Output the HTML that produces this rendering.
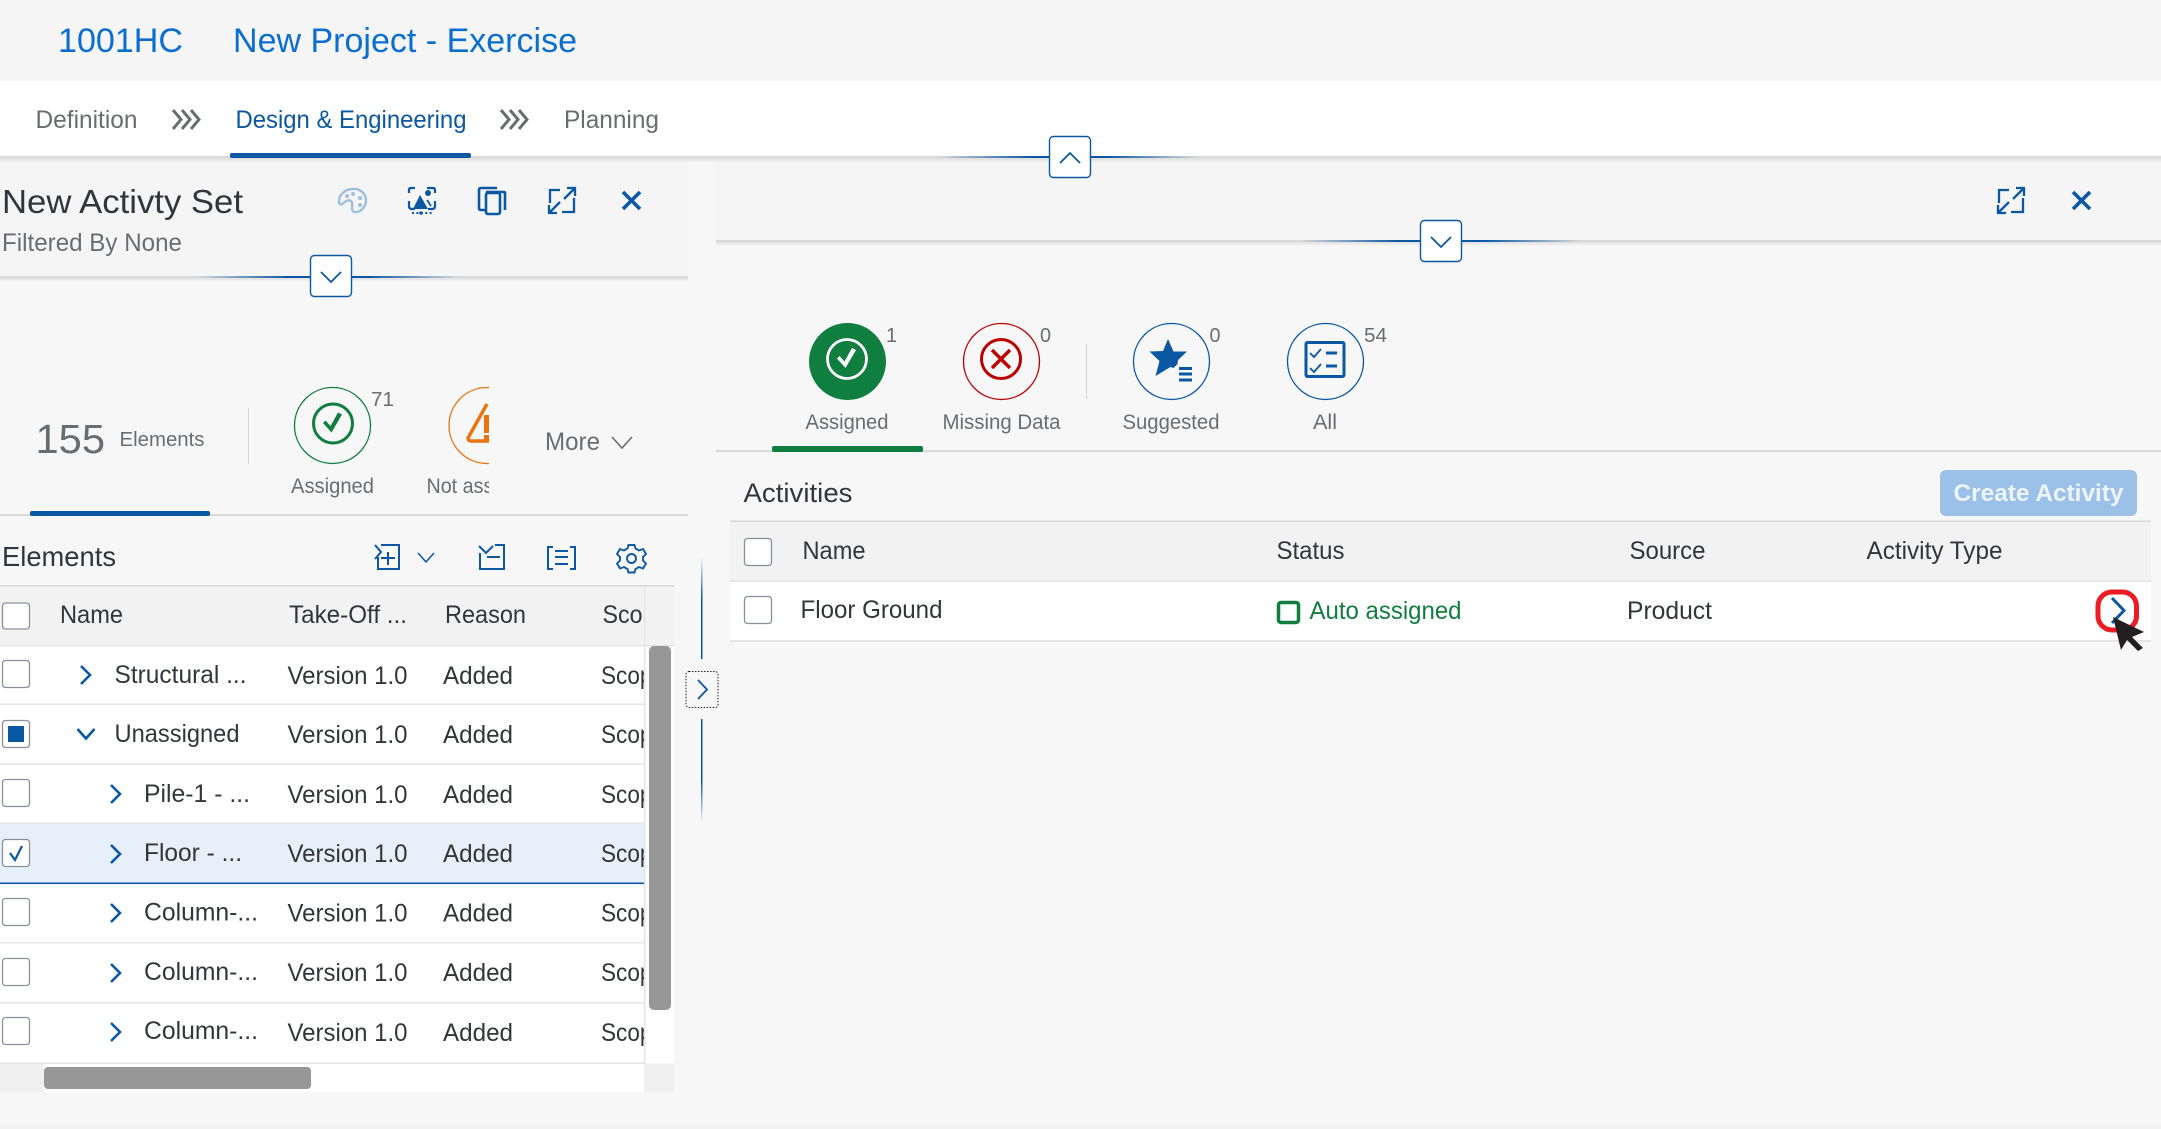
<!DOCTYPE html>
<html lang="en"><head><meta charset="utf-8"><title>New Project - Exercise</title>
<style>
html,body{margin:0;padding:0;background:#f7f7f7;width:2161px;height:1129px;overflow:hidden}
svg{display:block;font-family:"Liberation Sans",Arial,sans-serif}
.gr{fill:#6a6d70}
</style></head><body>
<svg xmlns="http://www.w3.org/2000/svg" width="2161" height="1129" viewBox="0 0 2161 1129">
<defs>
<linearGradient id="g1"><stop offset="0" stop-color="#0a57a4" stop-opacity="0"/><stop offset=".35" stop-color="#0a57a4"/><stop offset=".65" stop-color="#0a57a4"/><stop offset="1" stop-color="#0a57a4" stop-opacity="0"/></linearGradient>
<linearGradient id="g2" x1="0" y1="0" x2="0" y2="1"><stop offset="0" stop-color="#0a57a4" stop-opacity="0"/><stop offset=".4" stop-color="#0a57a4"/><stop offset="1" stop-color="#0a57a4"/></linearGradient>
<linearGradient id="g3" x1="0" y1="0" x2="0" y2="1"><stop offset="0" stop-color="#0a57a4"/><stop offset=".6" stop-color="#0a57a4"/><stop offset="1" stop-color="#0a57a4" stop-opacity="0"/></linearGradient>
<linearGradient id="s1" x1="0" y1="0" x2="0" y2="1"><stop offset="0" stop-color="#000" stop-opacity=".1"/><stop offset="1" stop-color="#000" stop-opacity="0"/></linearGradient>
<clipPath id="cScop"><rect x="590" y="586" width="54" height="480"/></clipPath>
<clipPath id="cNot"><rect x="420" y="380" width="69" height="125"/></clipPath>
<g id="exp" fill="none" stroke="#0a57a4" stroke-width="2.3"><path d="M2 16V3h10M16 12L27 1M19 1h8v8M26 11v14H14M12 15L1 26M1 18v8h8"/></g>
<g id="cl" fill="none" stroke="#0a57a4" stroke-width="3.6"><path d="M1 1L18 18M18 1L1 18"/></g>
</defs>

<!-- backgrounds -->
<rect width="2161" height="1129" fill="#f7f7f7"/>
<rect width="2161" height="81" fill="#f5f5f5"/>
<rect y="81" width="2161" height="75" fill="#fff"/>
<rect y="158" width="688" height="119" fill="#f5f5f5"/>
<rect x="716" y="158" width="1445" height="83" fill="#f5f5f5"/>
<rect y="156" width="2161" height="2" fill="#d9d9d9"/>
<rect y="158" width="2161" height="5" fill="url(#s1)"/>
<rect y="1125" width="2161" height="4" fill="#f2f2f2"/>

<!-- header -->
<text x="58" y="52" font-size="34" fill="#0a6ed1" textLength="125" lengthAdjust="spacingAndGlyphs">1001HC</text>
<text x="233" y="52" font-size="34" fill="#0a6ed1" textLength="344" lengthAdjust="spacingAndGlyphs">New Project - Exercise</text>

<!-- nav -->
<text x="35.500" y="128" font-size="25" class="gr" textLength="102" lengthAdjust="spacingAndGlyphs">Definition</text>
<path d="M173 110l8 9.500-8 9.500M182 110l8 9.500-8 9.500M191 110l8 9.500-8 9.500" fill="none" stroke="#6a6d70" stroke-width="3"/>
<text x="235.500" y="128" font-size="25" fill="#0a57a4" textLength="231" lengthAdjust="spacingAndGlyphs">Design &amp; Engineering</text>
<rect x="230" y="153" width="241" height="5" rx="2" fill="#0a57a4"/>
<path d="M501 110l8 9.500-8 9.500M510 110l8 9.500-8 9.500M519 110l8 9.500-8 9.500" fill="none" stroke="#6a6d70" stroke-width="3"/>
<text x="564" y="128" font-size="25" class="gr" textLength="95" lengthAdjust="spacingAndGlyphs">Planning</text>

<!-- main splitter up -->
<rect x="940" y="156" width="257" height="2" fill="url(#g1)"/>
<rect x="1049.500" y="136.500" width="41" height="41" rx="4" fill="#fff" stroke="#0a57a4" stroke-width="1.400"/>
<path d="M1060 163l10-10 10 10" fill="none" stroke="#0a57a4" stroke-width="1.800"/>

<!-- left pane head -->
<text x="2" y="213" font-size="33" fill="#32363a" textLength="241" lengthAdjust="spacingAndGlyphs">New Activty Set</text>
<text x="2" y="251" font-size="25" class="gr" textLength="180" lengthAdjust="spacingAndGlyphs">Filtered By None</text>

<!-- palette -->
<g fill="none" stroke="#9fbfdf" stroke-width="2.400">
<path d="M353 189c8-1 13 6 13 11 0 6-4 11-9 12-4 1-5-2-5-4 0-3 1-5-1-7-3-2-6 1-9 3-2 1-3 0-3-3 0-6 6-12 14-12z"/>
</g>
<g fill="#9fbfdf"><circle cx="347" cy="196" r="2"/><circle cx="353" cy="194" r="2"/><circle cx="360" cy="198" r="2"/><circle cx="360" cy="205" r="2"/></g>
<!-- photo -->
<path d="M409 193v-3q0-2 2-2h4M427 188h6q2 0 2 2v3M409 201v5q0 3 3 3h3M428 209h4q3 0 3-3v-5" fill="none" stroke="#0a57a4" stroke-width="2.200"/>
<circle cx="428" cy="193" r="3" fill="#0a57a4"/>
<path d="M420 195l8 14h-15z" fill="#0a57a4"/>
<path d="M427 200l4 6" stroke="#0a57a4" stroke-width="1.800"/>
<path d="M412 213h20" stroke="#0a57a4" stroke-width="2" stroke-dasharray="2 2.400"/>
<circle cx="421" cy="213" r="1.800" fill="#0a57a4"/>
<!-- copy -->
<path d="M485 210h-4q-2 0-2-2v-18q0-2 2-2h16" fill="none" stroke="#0a57a4" stroke-width="2.600"/>
<path d="M486 192h18q1 0 1 1v17" fill="none" stroke="#0a57a4" stroke-width="2.600"/>
<rect x="486" y="193" width="14" height="21" rx="2" fill="none" stroke="#0a57a4" stroke-width="2.600"/>
<use href="#exp" x="548" y="187"/>
<use href="#cl" x="622" y="191"/>

<!-- left splitter -->
<rect y="276" width="688" height="2" fill="#d9d9d9"/>
<rect y="278" width="688" height="4" fill="url(#s1)"/>
<rect x="197" y="276" width="262" height="2" fill="url(#g1)"/>
<rect x="310.500" y="255.500" width="41" height="41" rx="4" fill="#fff" stroke="#0a57a4" stroke-width="1.400"/>
<path d="M321 272l10 10 10-10" fill="none" stroke="#0a57a4" stroke-width="1.800"/>

<!-- left tabs -->
<text x="35.500" y="453" font-size="41" class="gr" textLength="69.500" lengthAdjust="spacingAndGlyphs">155</text>
<text x="119.500" y="446" font-size="20" class="gr" textLength="85" lengthAdjust="spacingAndGlyphs">Elements</text>
<rect x="248" y="408" width="1" height="56" fill="#d5d5d5"/>
<circle cx="332.500" cy="425.500" r="38" fill="none" stroke="#107e3e" stroke-width="1.300"/>
<circle cx="333" cy="423.500" r="19.500" fill="none" stroke="#107e3e" stroke-width="3"/>
<path d="M323 423l2.500-2.500 5 5.500 7.500-13.500 4 2-10.500 18z" fill="#107e3e"/>
<text x="371" y="406" font-size="20" class="gr" textLength="23" lengthAdjust="spacingAndGlyphs">71</text>
<text x="291" y="493" font-size="21" class="gr" textLength="83" lengthAdjust="spacingAndGlyphs">Assigned</text>
<g clip-path="url(#cNot)">
<circle cx="487" cy="425.500" r="38" fill="none" stroke="#e9730c" stroke-width="1.300"/>
<path d="M487 404l-19 34q0 3 3 3h32" fill="none" stroke="#e9730c" stroke-width="3.400"/>
<rect x="484" y="415" width="6" height="18" fill="#e9730c"/><rect x="484" y="435" width="6" height="5" fill="#e9730c"/>
<text x="426.500" y="493" font-size="21" class="gr" textLength="115" lengthAdjust="spacingAndGlyphs">Not assigned</text>
</g>
<text x="545" y="450" font-size="25" class="gr" textLength="55" lengthAdjust="spacingAndGlyphs">More</text>
<path d="M612 437l10 11 10-11" fill="none" stroke="#6a6d70" stroke-width="1.600"/>
<rect y="514" width="688" height="2" fill="#d9d9d9"/>
<rect x="30" y="511" width="180" height="5" rx="2" fill="#0a57a4"/>

<!-- elements toolbar -->
<text x="2" y="566" font-size="28" fill="#32363a" textLength="114" lengthAdjust="spacingAndGlyphs">Elements</text>
<path d="M381 545h18v24h-21v-12M375 545l6 7-6 7M388 552v13M381 558h14" fill="none" stroke="#0a57a4" stroke-width="2"/>
<path d="M418 553l8 9 8-9" fill="none" stroke="#0a57a4" stroke-width="1.500"/>
<path d="M479 546l7 7 7-7M495 545h9v24h-24v-16M487 557h13" fill="none" stroke="#0a57a4" stroke-width="2"/>
<path d="M553 547h-5v22h5M570 547h5v22h-5M555 551h13M555 557h13M555 564h13" fill="none" stroke="#0a57a4" stroke-width="2"/>
<g fill="none" stroke="#0a57a4" stroke-width="1.900"><path d="M628.500 545h6l1 3.500 3.500 2 4-1.500 3 5-3 3v3.500l3 3-3 5-4-1.500-3.500 2-1 3.500h-6l-1-3.500-3.500-2-4 1.500-3-5 3-3V557l-3-3 3-5 4 1.500 3.500-2z"/><circle cx="631.500" cy="558.500" r="4.500"/></g>

<!-- left table -->
<rect y="585" width="674" height="1.500" fill="#d9d9d9"/>
<rect y="586.500" width="674" height="59" fill="#f2f2f2"/>
<rect y="646" width="674" height="417" fill="#fff"/>
<rect y="645" width="674" height="1.500" fill="#e5e5e5"/>
<rect y="823" width="644" height="60" fill="#e5f0fa"/>
<rect y="703.500" width="644" height="1.500" fill="#e5e5e5"/>
<rect y="763.500" width="644" height="1.500" fill="#e5e5e5"/>
<rect y="822.500" width="644" height="1.500" fill="#e5e5e5"/>
<rect y="882.500" width="644" height="1.600" fill="#0a57a4"/>
<rect y="942" width="644" height="1.500" fill="#e5e5e5"/>
<rect y="1002" width="644" height="1.500" fill="#e5e5e5"/>
<rect y="1062.500" width="644" height="1.500" fill="#e5e5e5"/>
<rect y="1064" width="674" height="28" fill="#f0f0f0"/>
<rect x="44" y="1064" width="600" height="28" fill="#fff"/>
<rect x="644" y="586" width="1.500" height="478" fill="#e5e5e5"/>
<rect x="649" y="646" width="22" height="364" rx="5" fill="#979797"/>
<rect x="44" y="1067" width="267" height="22" rx="4" fill="#979797"/>

<g fill="#fff" stroke="#89919a" stroke-width="1.300">
<rect x="2.500" y="603" width="27" height="26" rx="3"/>
<rect x="2.500" y="660.500" width="27" height="27" rx="3"/>
<rect x="2.500" y="720.500" width="27" height="27" rx="3"/>
<rect x="2.500" y="779.500" width="27" height="27" rx="3"/>
<rect x="2.500" y="839.500" width="27" height="27" rx="3"/>
<rect x="2.500" y="898.500" width="27" height="27" rx="3"/>
<rect x="2.500" y="958.500" width="27" height="27" rx="3"/>
<rect x="2.500" y="1017.500" width="27" height="27" rx="3"/>
</g>
<rect x="8" y="726" width="16" height="16" fill="#0a57a4"/>
<path d="M10 853l5 7 7-14" fill="none" stroke="#0a57a4" stroke-width="2.200"/>

<g fill="#32363a" font-size="25">
<text x="60" y="623" textLength="63" lengthAdjust="spacingAndGlyphs">Name</text>
<text x="289" y="623" textLength="118" lengthAdjust="spacingAndGlyphs">Take-Off ...</text>
<text x="445" y="623" textLength="81" lengthAdjust="spacingAndGlyphs">Reason</text>
<text x="602.500" y="623" textLength="40" lengthAdjust="spacingAndGlyphs">Sco</text>

<text x="114.500" y="683" textLength="132" lengthAdjust="spacingAndGlyphs">Structural ...</text>
<text x="114.500" y="742" textLength="125" lengthAdjust="spacingAndGlyphs">Unassigned</text>
<text x="144" y="802" textLength="106" lengthAdjust="spacingAndGlyphs">Pile-1 - ...</text>
<text x="144" y="861" textLength="98" lengthAdjust="spacingAndGlyphs">Floor - ...</text>
<text x="144" y="920.500" textLength="114" lengthAdjust="spacingAndGlyphs">Column-...</text>
<text x="144" y="980" textLength="114" lengthAdjust="spacingAndGlyphs">Column-...</text>
<text x="144" y="1039" textLength="114" lengthAdjust="spacingAndGlyphs">Column-...</text>

<text x="287.500" y="684" textLength="120" lengthAdjust="spacingAndGlyphs">Version 1.0</text>
<text x="287.500" y="743" textLength="120" lengthAdjust="spacingAndGlyphs">Version 1.0</text>
<text x="287.500" y="803" textLength="120" lengthAdjust="spacingAndGlyphs">Version 1.0</text>
<text x="287.500" y="862" textLength="120" lengthAdjust="spacingAndGlyphs">Version 1.0</text>
<text x="287.500" y="921.500" textLength="120" lengthAdjust="spacingAndGlyphs">Version 1.0</text>
<text x="287.500" y="981" textLength="120" lengthAdjust="spacingAndGlyphs">Version 1.0</text>
<text x="287.500" y="1041" textLength="120" lengthAdjust="spacingAndGlyphs">Version 1.0</text>
<text x="443" y="684" textLength="70" lengthAdjust="spacingAndGlyphs">Added</text>
<text x="443" y="743" textLength="70" lengthAdjust="spacingAndGlyphs">Added</text>
<text x="443" y="803" textLength="70" lengthAdjust="spacingAndGlyphs">Added</text>
<text x="443" y="862" textLength="70" lengthAdjust="spacingAndGlyphs">Added</text>
<text x="443" y="921.500" textLength="70" lengthAdjust="spacingAndGlyphs">Added</text>
<text x="443" y="981" textLength="70" lengthAdjust="spacingAndGlyphs">Added</text>
<text x="443" y="1041" textLength="70" lengthAdjust="spacingAndGlyphs">Added</text>
<g clip-path="url(#cScop)">
<text x="601" y="684" textLength="64" lengthAdjust="spacingAndGlyphs">Scope</text>
<text x="601" y="743" textLength="64" lengthAdjust="spacingAndGlyphs">Scope</text>
<text x="601" y="803" textLength="64" lengthAdjust="spacingAndGlyphs">Scope</text>
<text x="601" y="862" textLength="64" lengthAdjust="spacingAndGlyphs">Scope</text>
<text x="601" y="921.500" textLength="64" lengthAdjust="spacingAndGlyphs">Scope</text>
<text x="601" y="981" textLength="64" lengthAdjust="spacingAndGlyphs">Scope</text>
<text x="601" y="1041" textLength="64" lengthAdjust="spacingAndGlyphs">Scope</text>
</g>
</g>
<g fill="none" stroke="#0a57a4" stroke-width="2.600">
<path d="M81 666l9 9-9 9"/>
<path d="M77.500 729l8.500 9.500 8.500-9.500"/>
<path d="M111 785l9 9-9 9"/>
<path d="M111 845l9 9-9 9"/>
<path d="M111 904l9 9-9 9"/>
<path d="M111 964l9 9-9 9"/>
<path d="M111 1023l9 9-9 9"/>
</g>

<!-- vertical splitter -->
<rect x="701" y="557" width="1.500" height="102" fill="url(#g2)"/>
<rect x="701" y="719" width="1.500" height="104" fill="url(#g3)"/>
<rect x="686" y="671.500" width="32" height="36" rx="3" fill="#f7f7f7" stroke="#222" stroke-width="1" stroke-dasharray="1.500 1.500"/>
<path d="M698 680l9 9.500-9 9.500" fill="none" stroke="#0a57a4" stroke-width="1.800"/>

<!-- right pane head -->
<use href="#exp" x="1997" y="187"/>
<use href="#cl" x="2072" y="191"/>
<rect x="716" y="240" width="1445" height="2" fill="#d9d9d9"/>
<rect x="716" y="242" width="1445" height="4" fill="url(#s1)"/>
<rect x="1300" y="240" width="282" height="2" fill="url(#g1)"/>
<rect x="1420.500" y="220.500" width="41" height="41" rx="4" fill="#fff" stroke="#0a57a4" stroke-width="1.400"/>
<path d="M1431 237l10 10 10-10" fill="none" stroke="#0a57a4" stroke-width="1.800"/>

<!-- right tabs -->
<circle cx="847.500" cy="361.500" r="38.500" fill="#107e3e"/>
<circle cx="847" cy="359" r="19.500" fill="none" stroke="#fff" stroke-width="2.800"/>
<path d="M837 358.500l2.500-2.500 5 5.500 7.500-13.500 4 2-10.500 18z" fill="#fff"/>
<text x="886" y="342" font-size="20" class="gr" textLength="11" lengthAdjust="spacingAndGlyphs">1</text>
<text x="805.500" y="429" font-size="21" class="gr" textLength="83" lengthAdjust="spacingAndGlyphs">Assigned</text>

<circle cx="1001.500" cy="361.500" r="38" fill="none" stroke="#bb0000" stroke-width="1.300"/>
<circle cx="1001" cy="359" r="19.500" fill="none" stroke="#bb0000" stroke-width="3"/>
<path d="M992 350l18 18M1010 350l-18 18" fill="none" stroke="#bb0000" stroke-width="3.400"/>
<text x="1040" y="342" font-size="20" class="gr" textLength="11" lengthAdjust="spacingAndGlyphs">0</text>
<text x="942.500" y="429" font-size="21" class="gr" textLength="118" lengthAdjust="spacingAndGlyphs">Missing Data</text>

<rect x="1086" y="344" width="1" height="55" fill="#d5d5d5"/>

<circle cx="1171.500" cy="361.500" r="38" fill="none" stroke="#0a57a4" stroke-width="1.300"/>
<path d="M1168 339l5.500 12.500h13.500l-9 8.500-.5 4-4 4-3-1-15 9 4-15-10-9.500 13.500-.5z" fill="#0a57a4"/>
<path d="M1179 368.500h13M1179 374h13M1179 380h13" stroke="#0a57a4" stroke-width="3"/>
<text x="1209.500" y="342" font-size="20" class="gr" textLength="11" lengthAdjust="spacingAndGlyphs">0</text>
<text x="1122.500" y="429" font-size="21" class="gr" textLength="97" lengthAdjust="spacingAndGlyphs">Suggested</text>

<circle cx="1325.500" cy="361.500" r="38" fill="none" stroke="#0a57a4" stroke-width="1.300"/>
<rect x="1306" y="342.500" width="38" height="34" rx="1.500" fill="none" stroke="#0a57a4" stroke-width="3"/>
<path d="M1310 353l4 4 7-8M1310 368l4 4 7-8" fill="none" stroke="#0a57a4" stroke-width="1.800"/>
<path d="M1326 353h11M1326 366h11" stroke="#0a57a4" stroke-width="3"/>
<text x="1364" y="342" font-size="20" class="gr" textLength="23" lengthAdjust="spacingAndGlyphs">54</text>
<text x="1313" y="429" font-size="21" class="gr" textLength="24" lengthAdjust="spacingAndGlyphs">All</text>

<rect x="716" y="450" width="1445" height="2" fill="#d9d9d9"/>
<rect x="772" y="446" width="151" height="6" rx="2" fill="#107e3e"/>

<!-- activities -->
<text x="743.500" y="502" font-size="27" fill="#32363a" textLength="109" lengthAdjust="spacingAndGlyphs">Activities</text>
<rect x="1940" y="470" width="197" height="46" rx="6" fill="#9bc1e9"/>
<text x="1953.500" y="501" font-size="24" font-weight="700" fill="#eef4fb" textLength="170" lengthAdjust="spacingAndGlyphs">Create Activity</text>

<rect x="730" y="521" width="1421" height="60" fill="#f2f2f2"/>
<rect x="730" y="520.500" width="1421" height="1.500" fill="#d9d9d9"/>
<rect x="730" y="581" width="1421" height="59" fill="#fff"/>
<rect x="730" y="580.500" width="1421" height="1.500" fill="#e5e5e5"/>
<rect x="730" y="640" width="1421" height="2" fill="#e5e5e5"/>
<rect x="744.500" y="538.500" width="27" height="27" rx="3" fill="#fff" stroke="#89919a" stroke-width="1.300"/>
<rect x="744.500" y="596.500" width="27" height="27" rx="3" fill="#fff" stroke="#89919a" stroke-width="1.300"/>
<g font-size="25" fill="#32363a">
<text x="802.500" y="559" textLength="63" lengthAdjust="spacingAndGlyphs">Name</text>
<text x="1276.500" y="559" textLength="68" lengthAdjust="spacingAndGlyphs">Status</text>
<text x="1629.500" y="559" textLength="76" lengthAdjust="spacingAndGlyphs">Source</text>
<text x="1866.500" y="559" textLength="136" lengthAdjust="spacingAndGlyphs">Activity Type</text>
<text x="800.500" y="618" textLength="142" lengthAdjust="spacingAndGlyphs">Floor Ground</text>
<text x="1627" y="619" textLength="85" lengthAdjust="spacingAndGlyphs">Product</text>
</g>
<rect x="1278.500" y="602.500" width="20" height="20" rx="2.500" fill="none" stroke="#107e3e" stroke-width="3.500"/>
<text x="1309.500" y="619" font-size="25" fill="#107e3e" textLength="152" lengthAdjust="spacingAndGlyphs">Auto assigned</text>

<!-- red highlight and cursor -->
<path d="M2112 598l12 12.500-12 12.500" fill="none" stroke="#0a57a4" stroke-width="3"/>
<rect x="2098" y="592" width="38.500" height="38" rx="14" fill="none" stroke="#ed1c24" stroke-width="5"/>
<path d="M2113 617l31 15-12 5 11 11-5 3-11-11-6 10z" fill="#231f20"/>
</svg>
</body></html>
